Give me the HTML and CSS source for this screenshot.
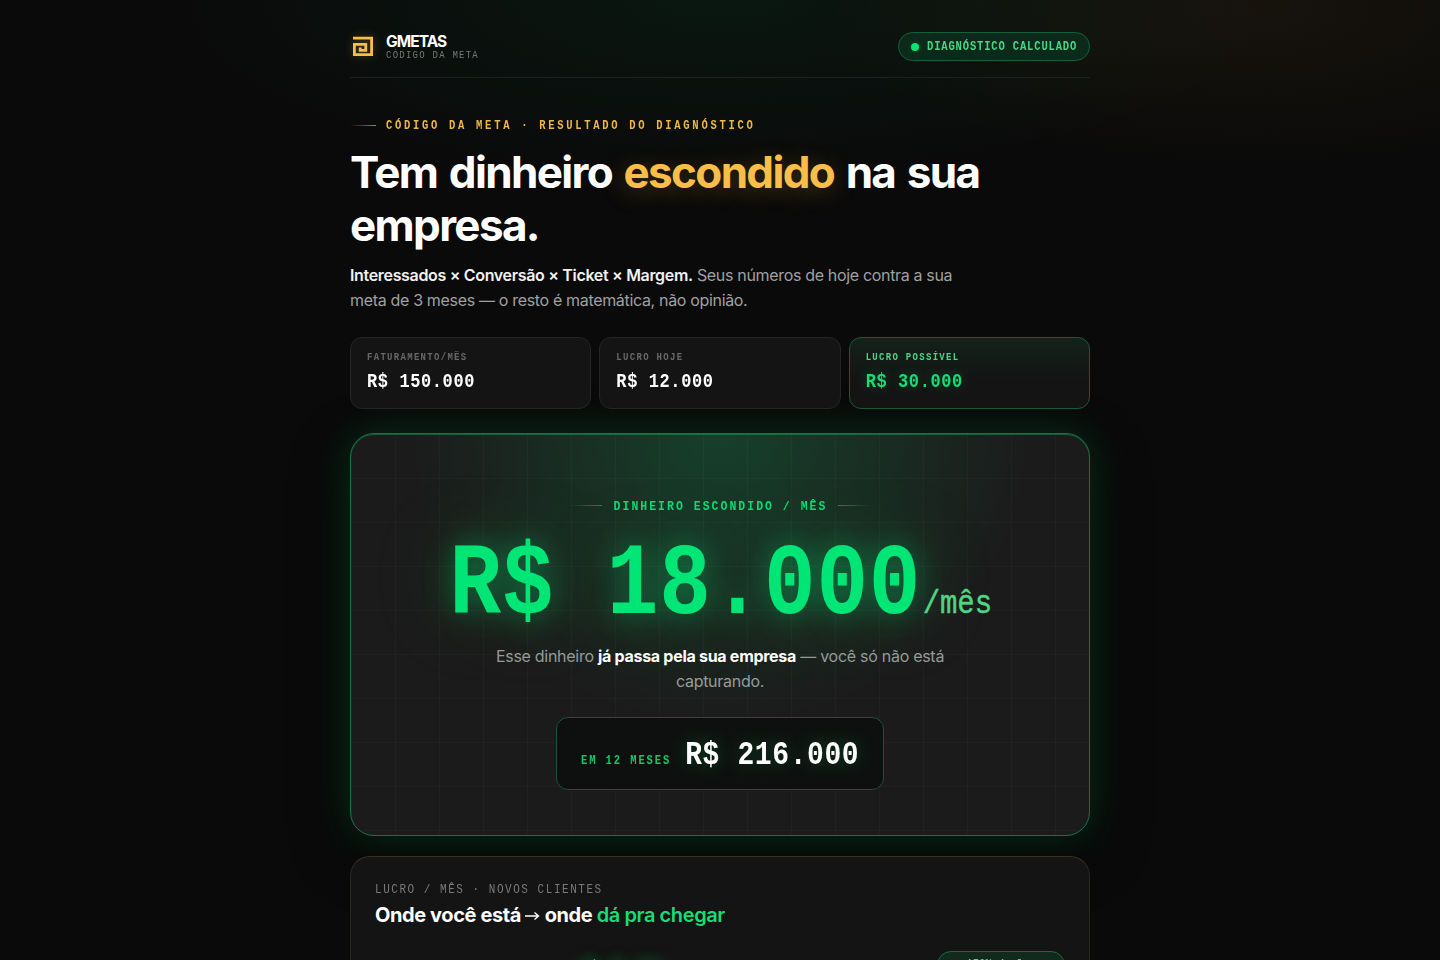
FILE: index.html
```html
<!DOCTYPE html>
<html lang="pt-BR">
<head>
<meta charset="utf-8">
<title>GMETAS · Código da Meta</title>
<link rel="stylesheet" href="styles.css">
</head>
<body>
<main class="page">
  <header class="top">
    <div class="brand">
      <svg class="logo" viewBox="0 0 26 26" width="26" height="26" fill="none" stroke="#f9bd4a" stroke-width="2.8"><path d="M3 4.2H21.6V20.6H4.4V10.3H15.8V16.3H10.2V13.6" stroke-linejoin="miter"/></svg>
      <div class="brand-text"><strong class="name">GMETAS</strong><span class="mono tag">CÓDIGO DA META</span></div>
    </div>
    <div class="status"><i class="dot"></i><span class="mono">DIAGNÓSTICO CALCULADO</span></div>
  </header>

  <section class="intro">
    <div class="eyebrow"><i class="rule"></i><span class="mono">CÓDIGO DA META · RESULTADO DO DIAGNÓSTICO</span></div>
    <h1 class="title">Tem dinheiro <em>escondido</em> na sua<br>empresa.</h1>
    <p class="lead"><strong>Interessados × Conversão × Ticket × Margem.</strong> Seus números de hoje contra a sua<br>meta de 3 meses — o resto é matemática, não opinião.</p>
  </section>

  <section class="stats">
    <div class="stat"><span class="mono label">FATURAMENTO/MÊS</span><span class="mono value">R$ 150.000</span></div>
    <div class="stat"><span class="mono label">LUCRO HOJE</span><span class="mono value">R$ 12.000</span></div>
    <div class="stat good"><span class="mono label">LUCRO POSSÍVEL</span><span class="mono value">R$ 30.000</span></div>
  </section>

  <section class="hero">
    <div class="hero-label"><i class="rule"></i><span class="mono">DINHEIRO ESCONDIDO / MÊS</span><i class="rule right"></i></div>
    <div class="amount"><span class="mono big">R$ 18.000</span><span class="mono per">/mês</span></div>
    <p class="hero-copy">Esse dinheiro <strong>já passa pela sua empresa</strong> — você só não está<br>capturando.</p>
    <div class="year"><span class="mono year-label">EM 12 MESES</span><span class="mono year-value">R$ 216.000</span></div>
  </section>

  <section class="chart">
    <span class="mono chart-label">LUCRO / MÊS · NOVOS CLIENTES</span>
    <h2 class="chart-title">Onde você está <svg class="arrow" viewBox="0 0 15 12" width="15" height="12" fill="none" stroke="#fff" stroke-width="1.4"><path d="M0 6H13.5M9.5 2.5L13.5 6L9.5 9.5"/></svg> onde <em>dá pra chegar</em></h2>
    <div class="chart-head"><span class="mono bar-value">R$ 30.000</span><span class="growth"><span class="mono">▲ 150% de lucro</span></span></div>
  </section>
</main>
</body>
</html>
```
FILE: styles.css
```css
* { box-sizing: border-box; }
body {
  margin: 0;
  height: 960px;
  overflow: hidden;
  color: #fff;
  font-family: Inter, "Liberation Sans", sans-serif;
  background:
    radial-gradient(ellipse 430px 160px at 1250px 10px, rgba(249,178,60,.055), transparent),
    radial-gradient(ellipse 560px 180px at 720px 0, rgba(0,230,118,.06), transparent),
    #0a0a0a;
}
em { font-style: normal; }
.page { width: 740px; height: 960px; margin: 0 auto; padding-top: 32px; }
/* Condensed look: stretch the monospace face vertically */
.mono {
  display: inline-block;
  font-family: "Liberation Mono", monospace;
  font-weight: 700;
  white-space: pre;
  transform: scaleY(1.15);
}
.top { display: flex; justify-content: space-between; align-items: flex-start; height: 46px; border-bottom: 1px solid #1c221f; }
.brand { display: flex; gap: 10px; }
.logo { margin-top: 2px; filter: drop-shadow(0 0 5px rgba(249,178,60,.3)); }
.brand-text { display: flex; flex-direction: column; }
.name { font-size: 15.5px; line-height: 19px; letter-spacing: -.95px; }
.tag { font-size: 9px; line-height: 10px; letter-spacing: 1.24px; color: #747976; font-weight: 400; }
.status { display: flex; align-items: center; gap: 8px; height: 29px; width: 192px; padding-left: 12px; border: 1px solid #15603c; border-radius: 15px; background: #0c2a1b; color: #45d885; font-size: 10.5px; letter-spacing: .85px; }
.dot { width: 8px; height: 8px; border-radius: 50%; background: #00e676; box-shadow: 0 0 5px rgba(0,230,118,.2); }
.intro { padding-top: 39px; }
.eyebrow { display: flex; align-items: center; gap: 10px; height: 17px; color: #f0b746; font-size: 10.5px; letter-spacing: 2.71px; }
.rule { width: 26px; height: 1.5px; background: linear-gradient(90deg, transparent, #b0822d); }
.title { margin: 12px 0 0; font-size: 44px; line-height: 53px; font-weight: 650; letter-spacing: -1.65px; word-spacing: 2.7px; }
.title em { color: #f9bd4a; text-shadow: 0 4px 24px rgba(249,178,60,.28); }
.lead { margin: 11px 0 0; font-size: 16px; line-height: 25px; color: #a0a0a0; letter-spacing: -.33px; white-space: nowrap; }
.lead strong { color: #f1f1f1; font-weight: 600; }
.stats { display: grid; grid-template-columns: repeat(3, 1fr); gap: 8px; margin-top: 24px; }
.stat { display: flex; flex-direction: column; align-items: flex-start; height: 72px; padding: 14px 16px; border: 1px solid #252525; border-radius: 12px; background: #141414; }
.label { font-size: 9px; line-height: 12px; letter-spacing: 1.3px; color: #686868; }
.value { margin-top: 7px; font-size: 17px; line-height: 22px; letter-spacing: .6px; transform: scaleY(1.22); }
.good { border-color: #17593a; background: linear-gradient(#14221a, #141414 60%); }
.good .label { color: #4bd584; }
.good .value { color: #14df76; text-shadow: 0 0 12px rgba(0,230,118,.3); }
.hero {
  display: flex; flex-direction: column; align-items: center;
  height: 403px; margin-top: 24px; padding-top: 63px;
  border: 1px solid #197048; border-radius: 24px;
  background:
    linear-gradient(rgba(255,255,255,.022) 1px, transparent 1px) 0 0 / 44px 44px,
    linear-gradient(90deg, rgba(255,255,255,.022) 1px, transparent 1px) 0 0 / 44px 44px,
    radial-gradient(ellipse 310px 290px at 50% 0, rgba(0,230,118,.18), transparent),
    #1b1b1b;
  box-shadow: inset 0 1px 0 rgba(0,230,118,.3), 0 0 42px rgba(0,230,118,.18), 0 18px 60px rgba(0,0,0,.45);
}
.hero-label { display: flex; align-items: center; gap: 12px; height: 17px; color: #10db73; font-size: 11.5px; letter-spacing: 2.01px; }
.hero-label .rule { width: 32px; background: linear-gradient(90deg, transparent, #238257); }
.hero-label .right { background: linear-gradient(270deg, transparent, #238257); margin-left: -1px; }
.amount { display: flex; align-items: baseline; height: 106px; margin-top: 15px; white-space: nowrap; }
.big { font-size: 86px; line-height: 114px; letter-spacing: .8px; color: #00e676; text-shadow: 0 0 28px rgba(0,230,118,.42), 0 0 75px rgba(0,230,118,.25); transform: scaleY(1.19); }
.per { font-size: 29px; letter-spacing: -.1px; color: #50d582; font-weight: 400; -webkit-text-stroke: .4px #50d582; transform: translate(1.5px, 4px) scaleY(1.17); transform-origin: 50% 75%; }
.hero-copy { margin: 9px 0 0; text-align: center; font-size: 16px; line-height: 25px; letter-spacing: -.28px; color: #969c99; }
.hero-copy strong { color: #fff; font-weight: 650; }
.year { display: flex; align-items: baseline; gap: 14px; width: 328px; height: 73px; margin-top: 23px; padding: 19px 24px; border: 1px solid #185238; border-radius: 12px; background: #0e100f; }
.year-label { position: relative; top: 1px; font-size: 10.5px; letter-spacing: 1.9px; color: #12c967; }
.year-value { font-size: 28px; line-height: 37px; letter-spacing: .6px; text-shadow: 0 0 18px rgba(0,230,118,.3); transform: scaleY(1.2); }
.chart { height: 300px; margin-top: 20px; padding: 25px 24px; border: 1px solid #292820; border-top-color: #3b3020; border-radius: 20px; background: #141414; }
.chart-label { display: block; font-size: 11px; line-height: 16px; letter-spacing: 1.53px; color: #7a7a7a; font-weight: 400; }
.chart-title { margin: 3px 0 0; font-size: 20px; line-height: 28px; font-weight: 650; letter-spacing: -.4px; white-space: nowrap; }
.chart-title em { color: #18dc76; font-weight: 600; }
.chart-head { display: flex; align-items: flex-start; justify-content: space-between; margin-top: 22px; padding-left: 206px; }
.bar-value { margin-top: 7px; font-size: 15px; line-height: 17px; color: #00e676; text-shadow: 0 0 14px rgba(0,230,118,.5); transform: none; }
.growth { display: flex; justify-content: center; width: 128px; height: 28px; padding-top: 7px; border: 1px solid #176b43; border-radius: 14px; background: #122a1e; color: #45d885; font-size: 10.5px; line-height: 13px; }
```
